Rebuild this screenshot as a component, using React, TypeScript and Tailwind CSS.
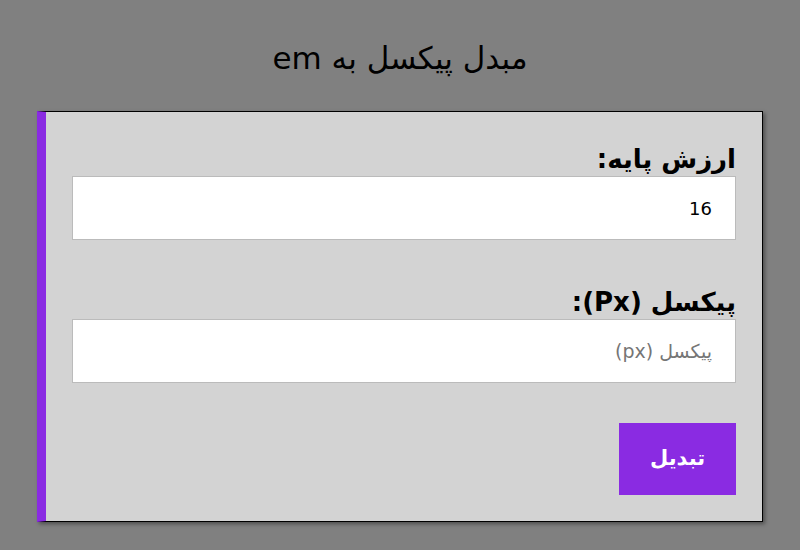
export default function App() {
  return (
    <div
      dir="rtl"
      className="min-h-[550px] bg-[#808080] pt-[34px] pb-[28px] px-[37px]"
      style={{ fontFamily: '"DejaVu Sans", sans-serif' }}
    >
      <h1 className="text-center text-[31px] leading-[48px] text-black mb-[29px]">مبدل پیکسل به em</h1>

      <div className="bg-[#d3d3d3] border border-black border-l-[9px] border-l-[#8a2be2] shadow-[2px_2px_4px_rgba(0,0,0,0.4)] px-[26px] pt-[30px] pb-[26px]">
        <label className="block text-[26px] font-bold leading-[34px] text-black">ارزش پایه:</label>
        <input
          defaultValue="16"
          className="block w-full h-[64px] bg-white border border-[#bbbbbb] px-[23px] text-[18px] text-black outline-none"
        />

        <label className="block text-[26px] font-bold leading-[34px] text-black mt-[45px]">پیکسل (Px):</label>
        <input
          placeholder="پیکسل (px)"
          className="block w-full h-[64px] bg-white border border-[#bbbbbb] px-[23px] text-[19px] text-black outline-none placeholder:text-[#757575]"
        />

        <button className="mt-[40px] w-[117px] h-[72px] bg-[#8a2be2] text-white text-[21px] font-bold">تبدیل</button>
      </div>
    </div>
  )
}
